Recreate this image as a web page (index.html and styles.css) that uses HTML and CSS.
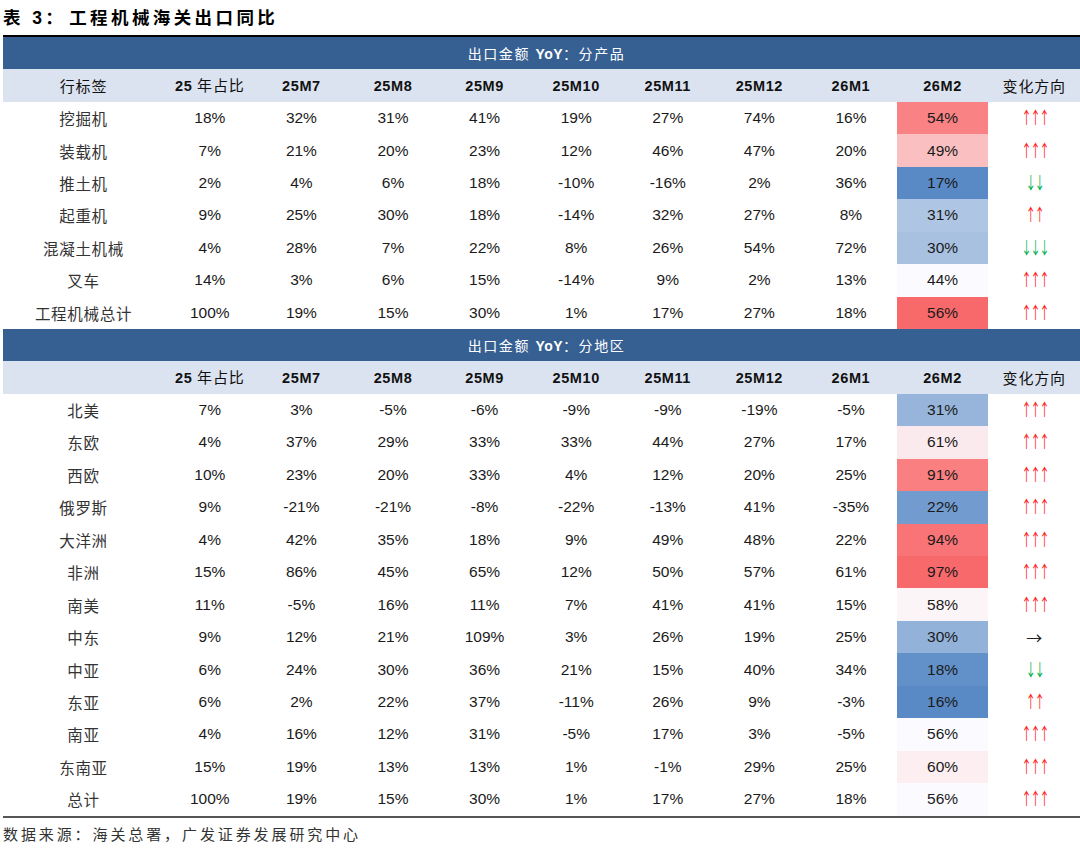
FILE: index.html
```html
<!DOCTYPE html>
<html lang="zh-CN">
<head>
<meta charset="utf-8">
<title>工程机械海关出口同比</title>
<link rel="stylesheet" href="styles.css">
</head>
<body>
<div class="page">
  <h1 class="title"><span class="tno">表 3：</span>工程机械海关出口同比</h1>
  <div class="frame">
    <table class="grid">
      <colgroup><col class="c-label"><col class="c-num" span="10"></colgroup>
      <tbody>
        <tr class="band"><td colspan="11"><span class="cjk">出口金额</span> <b>YoY</b><span class="cjk">：分产品</span></td></tr>
        <tr class="head"><td class="cjk">行标签</td><td>25 <span class="cjk">年占比</span></td><td>25M7</td><td>25M8</td><td>25M9</td><td>25M10</td><td>25M11</td><td>25M12</td><td>26M1</td><td>26M2</td><td class="cjk">变化方向</td></tr>
        <tr><td class="lbl">挖掘机</td><td>18%</td><td>32%</td><td>31%</td><td>41%</td><td>19%</td><td>27%</td><td>74%</td><td>16%</td><td style="background:#F98284">54%</td><td><span class="arr up">↑↑↑</span></td></tr>
        <tr><td class="lbl">装载机</td><td>7%</td><td>21%</td><td>20%</td><td>23%</td><td>12%</td><td>46%</td><td>47%</td><td>20%</td><td style="background:#FABFC1">49%</td><td><span class="arr up">↑↑↑</span></td></tr>
        <tr><td class="lbl">推土机</td><td>2%</td><td>4%</td><td>6%</td><td>18%</td><td>-10%</td><td>-16%</td><td>2%</td><td>36%</td><td style="background:#5A8AC6">17%</td><td><span class="arr down">↓↓</span></td></tr>
        <tr><td class="lbl">起重机</td><td>9%</td><td>25%</td><td>30%</td><td>18%</td><td>-14%</td><td>32%</td><td>27%</td><td>8%</td><td style="background:#AEC5E4">31%</td><td><span class="arr up">↑↑</span></td></tr>
        <tr><td class="lbl">混凝土机械</td><td>4%</td><td>28%</td><td>7%</td><td>22%</td><td>8%</td><td>26%</td><td>54%</td><td>72%</td><td style="background:#A8C1E1">30%</td><td><span class="arr down">↓↓↓</span></td></tr>
        <tr><td class="lbl">叉车</td><td>14%</td><td>3%</td><td>6%</td><td>15%</td><td>-14%</td><td>9%</td><td>2%</td><td>13%</td><td style="background:#FAFAFF">44%</td><td><span class="arr up">↑↑↑</span></td></tr>
        <tr><td class="lbl">工程机械总计</td><td>100%</td><td>19%</td><td>15%</td><td>30%</td><td>1%</td><td>17%</td><td>27%</td><td>18%</td><td style="background:#F8696B">56%</td><td><span class="arr up">↑↑↑</span></td></tr>

        <tr class="band"><td colspan="11"><span class="cjk">出口金额</span> <b>YoY</b><span class="cjk">：分地区</span></td></tr>
        <tr class="head"><td></td><td>25 <span class="cjk">年占比</span></td><td>25M7</td><td>25M8</td><td>25M9</td><td>25M10</td><td>25M11</td><td>25M12</td><td>26M1</td><td>26M2</td><td class="cjk">变化方向</td></tr>
        <tr><td class="lbl">北美</td><td>7%</td><td>3%</td><td>-5%</td><td>-6%</td><td>-9%</td><td>-9%</td><td>-19%</td><td>-5%</td><td style="background:#97B5DB">31%</td><td><span class="arr up">↑↑↑</span></td></tr>
        <tr><td class="lbl">东欧</td><td>4%</td><td>37%</td><td>29%</td><td>33%</td><td>33%</td><td>44%</td><td>27%</td><td>17%</td><td style="background:#FBEAED">61%</td><td><span class="arr up">↑↑↑</span></td></tr>
        <tr><td class="lbl">西欧</td><td>10%</td><td>23%</td><td>20%</td><td>33%</td><td>4%</td><td>12%</td><td>20%</td><td>25%</td><td style="background:#F97F81">91%</td><td><span class="arr up">↑↑↑</span></td></tr>
        <tr><td class="lbl">俄罗斯</td><td>9%</td><td>-21%</td><td>-21%</td><td>-8%</td><td>-22%</td><td>-13%</td><td>41%</td><td>-35%</td><td style="background:#729BCF">22%</td><td><span class="arr up">↑↑↑</span></td></tr>
        <tr><td class="lbl">大洋洲</td><td>4%</td><td>42%</td><td>35%</td><td>18%</td><td>9%</td><td>49%</td><td>48%</td><td>22%</td><td style="background:#F87476">94%</td><td><span class="arr up">↑↑↑</span></td></tr>
        <tr><td class="lbl">非洲</td><td>15%</td><td>86%</td><td>45%</td><td>65%</td><td>12%</td><td>50%</td><td>57%</td><td>61%</td><td style="background:#F8696B">97%</td><td><span class="arr up">↑↑↑</span></td></tr>
        <tr><td class="lbl">南美</td><td>11%</td><td>-5%</td><td>16%</td><td>11%</td><td>7%</td><td>41%</td><td>41%</td><td>15%</td><td style="background:#FCF5F8">58%</td><td><span class="arr up">↑↑↑</span></td></tr>
        <tr><td class="lbl">中东</td><td>9%</td><td>12%</td><td>21%</td><td>109%</td><td>3%</td><td>26%</td><td>19%</td><td>25%</td><td style="background:#93B2DA">30%</td><td class="flat">→</td></tr>
        <tr><td class="lbl">中亚</td><td>6%</td><td>24%</td><td>30%</td><td>36%</td><td>21%</td><td>15%</td><td>40%</td><td>34%</td><td style="background:#6290C9">18%</td><td><span class="arr down">↓↓</span></td></tr>
        <tr><td class="lbl">东亚</td><td>6%</td><td>2%</td><td>22%</td><td>37%</td><td>-11%</td><td>26%</td><td>9%</td><td>-3%</td><td style="background:#5A8AC6">16%</td><td><span class="arr up">↑↑</span></td></tr>
        <tr><td class="lbl">南亚</td><td>4%</td><td>16%</td><td>12%</td><td>31%</td><td>-5%</td><td>17%</td><td>3%</td><td>-5%</td><td style="background:#FAFAFF">56%</td><td><span class="arr up">↑↑↑</span></td></tr>
        <tr><td class="lbl">东南亚</td><td>15%</td><td>19%</td><td>13%</td><td>13%</td><td>1%</td><td>-1%</td><td>29%</td><td>25%</td><td style="background:#FCEEF1">60%</td><td><span class="arr up">↑↑↑</span></td></tr>
        <tr><td class="lbl">总计</td><td>100%</td><td>19%</td><td>15%</td><td>30%</td><td>1%</td><td>17%</td><td>27%</td><td>18%</td><td style="background:#FAFAFF">56%</td><td><span class="arr up">↑↑↑</span></td></tr>
      </tbody>
    </table>
  </div>
  <p class="source">数据来源：海关总署，广发证券发展研究中心</p>
</div>
</body>
</html>
```

FILE: styles.css
```css
* { box-sizing: border-box; }
html, body {
  margin: 0;
  padding: 0;
  background: #ffffff;
  overflow: hidden;
}
body {
  font-family: "Liberation Sans", Arial, "Noto Sans CJK SC", sans-serif;
  color: #1a1a1a;
}
.page {
  width: 1080px;
  padding-left: 3px;
}
.title {
  margin: 0;
  height: 35px;
  padding-top: 6px;
  font-family: "Liberation Sans", "Noto Sans CJK SC", sans-serif;
  font-size: 17.5px;
  line-height: 24px;
  font-weight: bold;
  letter-spacing: 3.4px;
  color: #000;
}
.tno {
  margin-right: 3px;
}
.frame {
  border-top: 2px solid #000;
  border-bottom: 2px solid #555;
}
.grid {
  width: 1077px;
  border-collapse: collapse;
  table-layout: fixed;
}
.c-label { width: 161px; }
.c-num { width: 91.6px; }
.grid td {
  height: 32.45px;
  padding: 0;
  text-align: center;
  vertical-align: middle;
  font-size: 15.5px;
  line-height: 18px;
  white-space: nowrap;
}
.cjk {
  font-family: "Noto Sans CJK SC", sans-serif;
}
.band td {
  background: #366092;
  color: #ffffff;
  font-size: 14px;
  letter-spacing: 1.6px;
  padding-left: 10px;
}
.band b {
  font-weight: bold;
  letter-spacing: 0.4px;
}
.head td {
  background: #dce3f0;
  font-weight: bold;
  font-size: 14.5px;
  letter-spacing: 0.6px;
  color: #111;
}
.head td.cjk, .head .cjk {
  font-weight: normal;
  font-size: 15px;
  letter-spacing: 0.8px;
}
.lbl {
  font-family: "Noto Sans CJK SC", sans-serif;
  font-size: 15px;
  letter-spacing: 0.7px;
  color: #333;
}
.arr {
  display: inline-block;
  font-family: "Noto Sans CJK SC", sans-serif;
  font-size: 17px;
  line-height: 18px;
  letter-spacing: -2.4px;
  padding-left: 2.4px;
  transform: scaleX(0.62);
  transform-origin: center;
}
.up { color: #ff1a1a; }
.down { color: #00b050; }
.grid td.flat {
  font-family: "Noto Sans CJK SC", sans-serif;
  font-size: 16px;
  color: #222;
}
.source {
  margin: 0;
  padding-top: 5px;
  font-family: "Noto Sans CJK SC", sans-serif;
  font-size: 15px;
  line-height: 22px;
  letter-spacing: 2.9px;
  color: #333;
}
```
